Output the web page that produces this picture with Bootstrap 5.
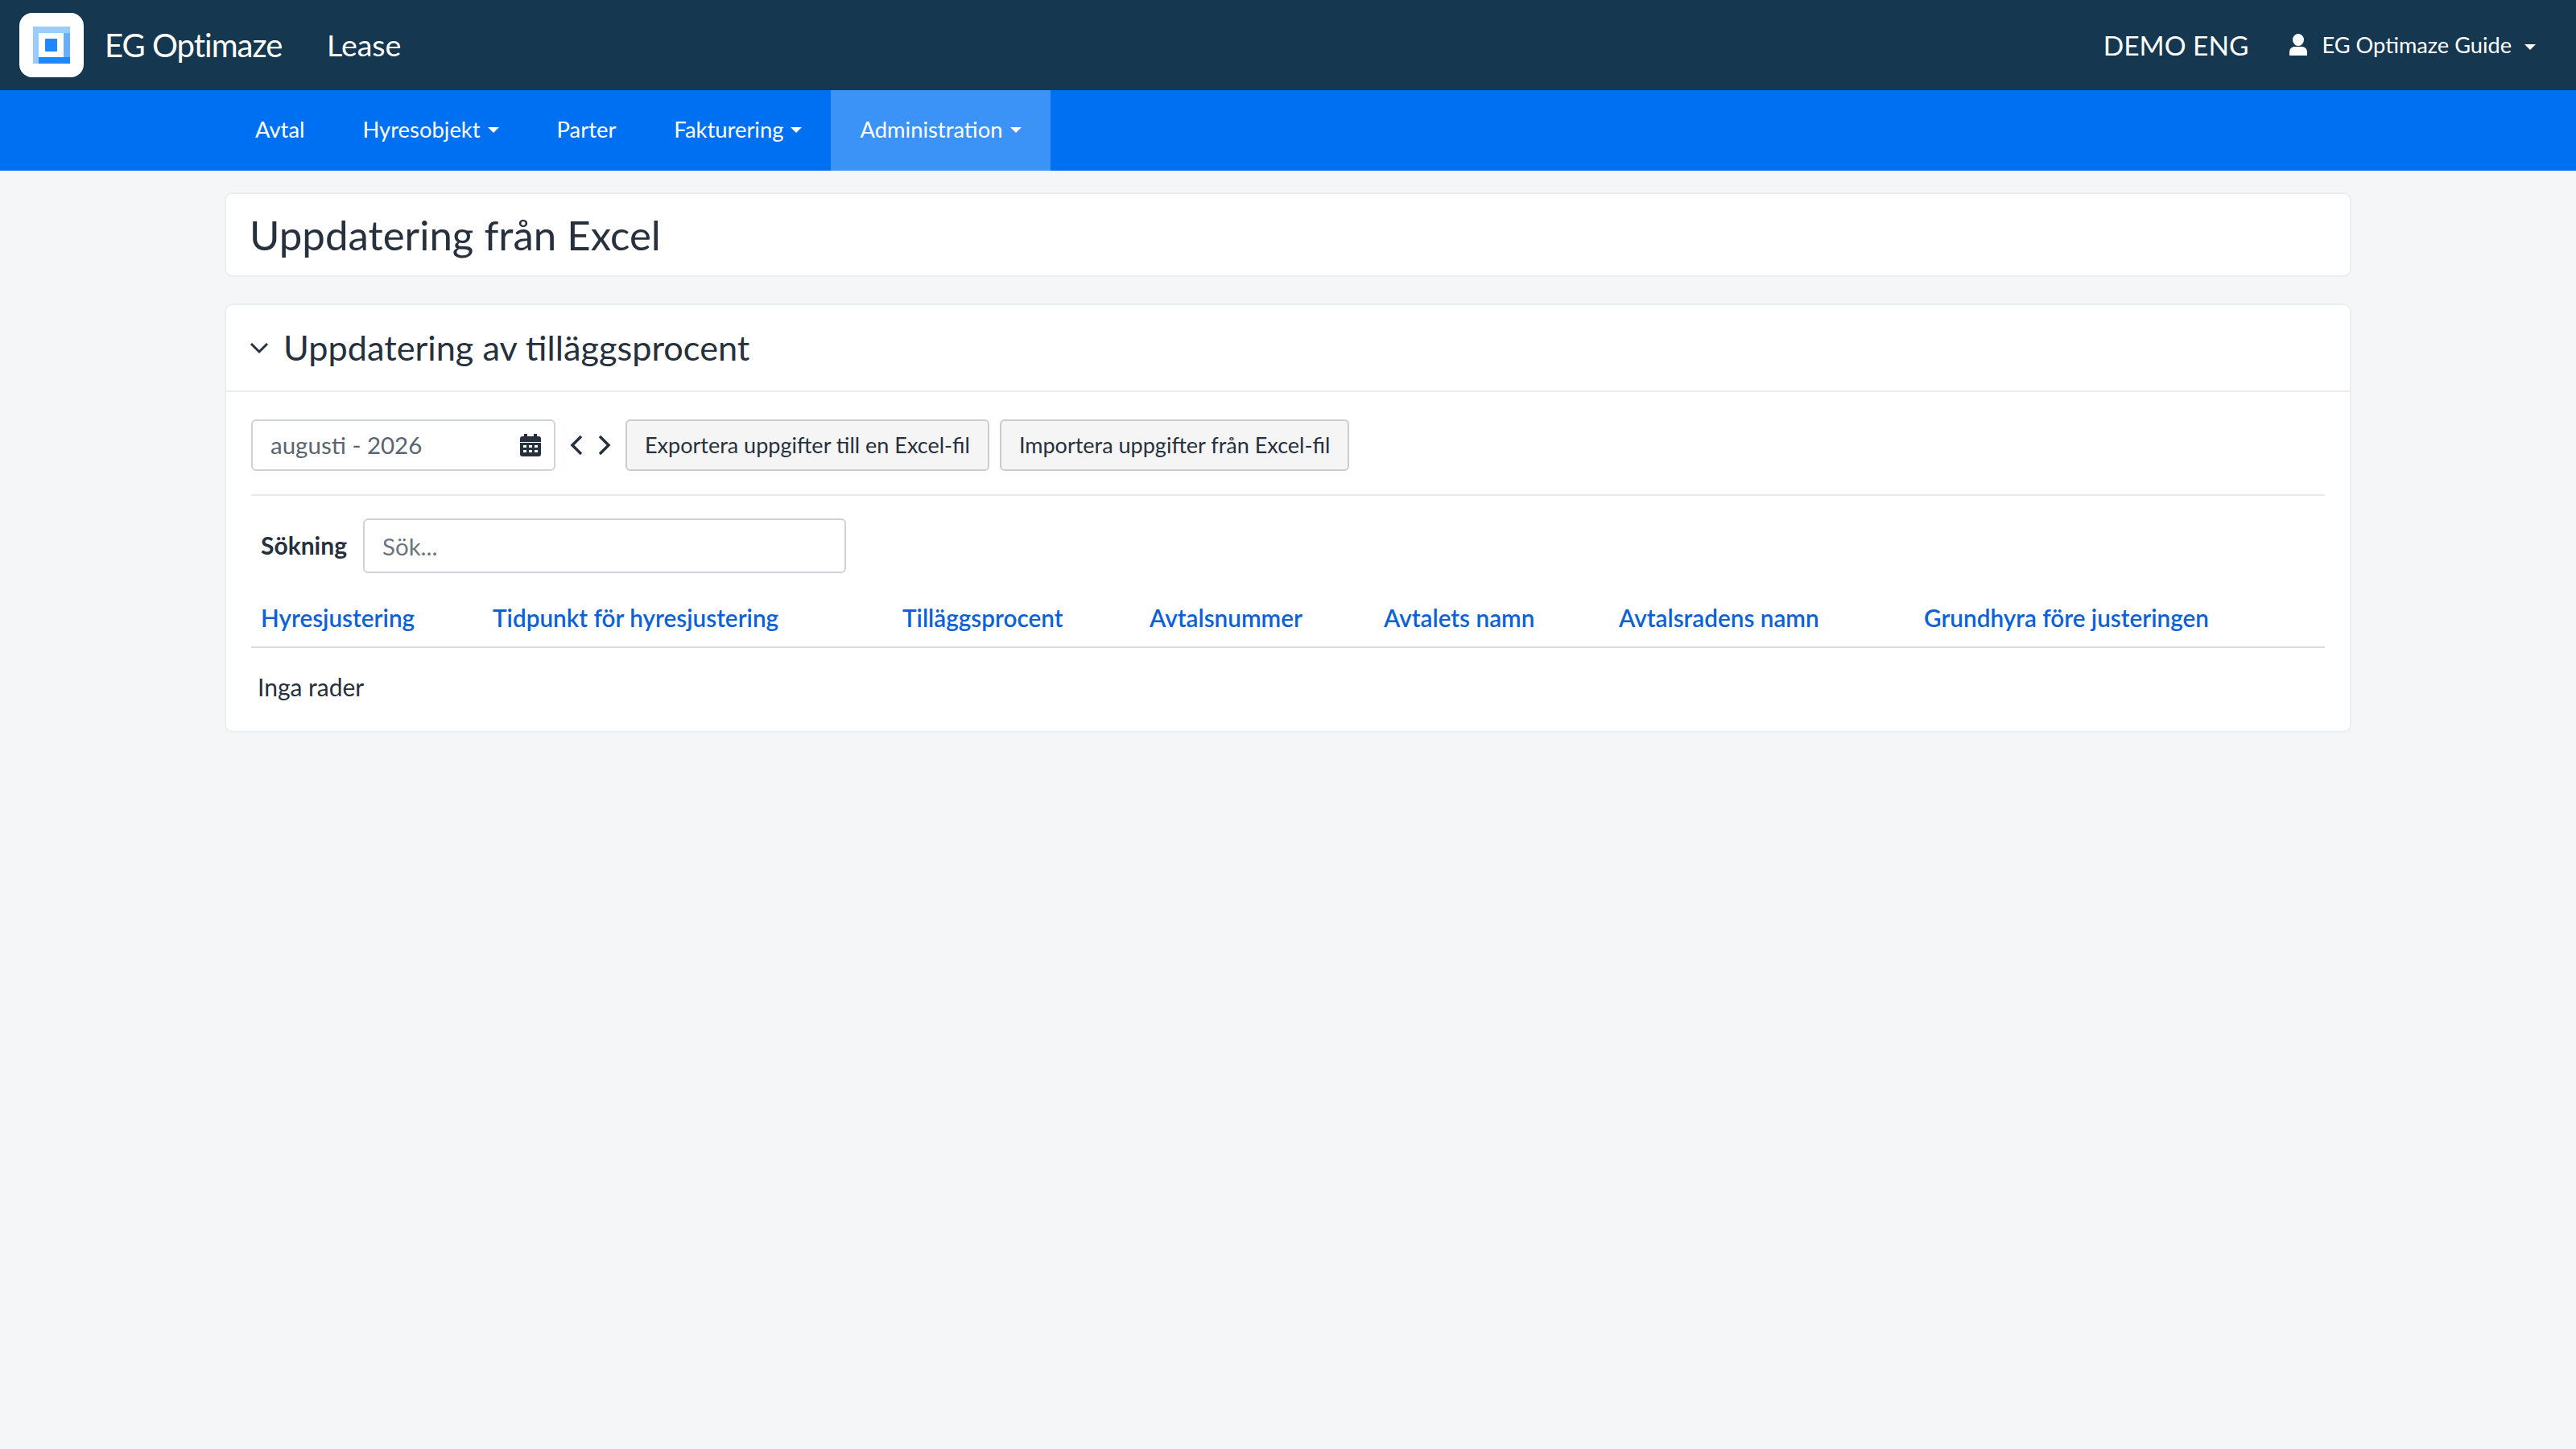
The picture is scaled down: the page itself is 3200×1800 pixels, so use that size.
<!doctype html>
<html lang="sv">
<head>
<meta charset="utf-8">
<title>Uppdatering från Excel</title>
<link href="https://cdn.jsdelivr.net/npm/bootstrap@5.3.0/dist/css/bootstrap.min.css" rel="stylesheet">
<style>
html,body{height:100%}
body{background:#f5f6f8;color:#27303d;font-family:"Lato","Liberation Sans",sans-serif;font-size:30px;line-height:1.5}
.topbar{height:112px;background:#15374f;color:#fff;padding:0 50px 0 24px}
.logo-box{width:80px;height:80px;background:#fff;border-radius:16px}
.brand-name{font-size:40px;margin-left:26px;letter-spacing:-1px;width:276px;white-space:nowrap}
.app-name{font-size:37.500px}
.tenant{font-size:33.500px;margin-right:49px}
.user-name{font-size:27.200px;margin-left:18px;white-space:nowrap}
.caret-down{display:inline-block;width:0;height:0;border-left:7px solid transparent;border-right:7px solid transparent;border-top:7px solid currentColor;margin-left:9px;vertical-align:middle}
.mainbar{height:100px;background:#0070f2;padding-left:281px}
.mainbar .nav-link{color:#fff;font-size:27.400px;padding:0 36px 2px;height:100px;display:flex;align-items:center}
.mainbar .nav-link.active-item{background:#3b93f7}
.page-wrap{padding:27px 279px 0}
.panel-card{border:2px solid #ebedf0;border-radius:10px;background:#fff}
.title-card{height:105px;padding:0 29px;margin-bottom:33px}
.page-title{font-size:51px;font-weight:400;margin:0}
.panel-head{height:108px;padding:0 29px;border-bottom:2px solid #ebedf0;gap:18px}
.panel-title{font-size:43.300px;font-weight:400;margin:0}
.panel-body{padding:34px 31px 0;height:421px}
.date-box{width:378px;height:64px;border:2px solid #cfd3d8;border-radius:6px;padding:0 16px 0 22px;font-size:29.500px;color:#5b6470}
.arrows{gap:15px;margin:0 17px}
.excel-btn{height:64px;background:#f5f5f5;border:2px solid #cccccc;border-radius:6px;color:#27303d;font-size:27px;padding:0 22px;margin-right:13px}
.excel-btn:hover{background:#f5f5f5;border-color:#ccc}
.sep{border-top:2px solid #e8e9eb;margin:29px 0 28px}
.search-label{font-weight:700;font-size:30px;margin:0 20px 2px 12px}
.search-input{width:600px;height:68px;border:2px solid #cfd3d8;border-radius:6px;padding:0 22px;font-size:29.500px}
.search-input::placeholder{color:#6c757d}
.search-input:focus{box-shadow:none;border-color:#cfd3d8}
.data-table{margin:32px 0 0;table-layout:fixed;width:100%}
.data-table>thead>tr>th{border-bottom:2px solid #d9dbde;padding:0 12px 12px;height:60px;font-weight:600;background:transparent;vertical-align:bottom}
.data-table a{color:#0b62d6;text-decoration:none;font-size:29.700px;white-space:nowrap}
.data-table>tbody>tr>td{border:0;padding:26px 8px 0;background:transparent;font-size:30px;color:#27303d}
.c1{width:288px}.c2{width:509px}.c3{width:307px}.c4{width:291px}.c5{width:292px}.c6{width:379px}
</style>
</head>
<body>
<header class="topbar d-flex align-items-center">
  <div class="logo-box d-flex align-items-center justify-content-center flex-shrink-0">
    <svg width="46" height="46" viewBox="0 0 46 46" aria-hidden="true">
      <path fill="#99ccff" d="M0 0h46v8H7v38H0z"/>
      <path fill="#66b0ff" d="M38 8h8v30h-8z"/>
      <path fill="#1e88ff" d="M7 38h39v8H7z"/>
      <rect x="15" y="15" width="15" height="16" rx="1" fill="#1e88ff"/>
    </svg>
  </div>
  <div class="brand-name">EG Optimaze</div>
  <div class="app-name">Lease</div>
  <div class="ms-auto tenant">DEMO ENG</div>
  <svg width="24" height="28" viewBox="0 0 24 28" aria-hidden="true"><ellipse cx="12" cy="7.500" rx="7" ry="7.500" fill="#fff"/><path fill="#fff" d="M1 27v-4c0-4.500 3-7 7-7h8c4 0 7 2.500 7 7v4z"/></svg>
  <div class="user-name">EG Optimaze Guide <span class="caret-down"></span></div>
</header>
<nav class="mainbar nav">
  <a class="nav-link" href="#">Avtal</a>
  <a class="nav-link" href="#">Hyresobjekt<span class="caret-down"></span></a>
  <a class="nav-link" href="#">Parter</a>
  <a class="nav-link" href="#">Fakturering<span class="caret-down"></span></a>
  <a class="nav-link active-item" href="#">Administration<span class="caret-down"></span></a>
</nav>
<main class="page-wrap">
  <section class="panel-card title-card d-flex align-items-center">
    <h1 class="page-title">Uppdatering från Excel</h1>
  </section>
  <section class="panel-card">
    <div class="panel-head d-flex align-items-center">
      <svg width="24" height="16" viewBox="0 0 24 16" aria-hidden="true"><path d="M2 3l10 10L22 3" fill="none" stroke="#27303d" stroke-width="3"/></svg>
      <h2 class="panel-title">Uppdatering av tilläggsprocent</h2>
    </div>
    <div class="panel-body">
      <div class="d-flex align-items-center">
        <div class="date-box d-flex align-items-center justify-content-between">
          <span>augusti - 2026</span>
          <svg width="26" height="28" viewBox="0 0 26 28" aria-hidden="true"><path fill="#27303d" fill-rule="evenodd" d="M5 0h4v3h8V0h4v3h2a3 3 0 0 1 3 3v4H0V6a3 3 0 0 1 3-3h2zM0 11h26v14a3 3 0 0 1-3 3H3a3 3 0 0 1-3-3zM4 14v3h4v-3zm7 0v3h4v-3zm7 0v3h4v-3zM4 20v3h4v-3zm7 0v3h4v-3zm7 0v3h4v-3z"/></svg>
        </div>
        <div class="arrows d-flex align-items-center">
          <svg width="19" height="26" viewBox="0 0 19 26" aria-hidden="true"><path d="M15 2L4 13l11 11" fill="none" stroke="#27303d" stroke-width="3.500"/></svg>
          <svg width="19" height="26" viewBox="0 0 19 26" aria-hidden="true"><path d="M4 2l11 11L4 24" fill="none" stroke="#27303d" stroke-width="3.500"/></svg>
        </div>
        <button type="button" class="btn excel-btn">Exportera uppgifter till en Excel-fil</button>
        <button type="button" class="btn excel-btn">Importera uppgifter från Excel-fil</button>
      </div>
      <div class="sep"></div>
      <div class="d-flex align-items-center">
        <label class="search-label" for="sok">Sökning</label>
        <input id="sok" class="form-control search-input" type="text" placeholder="Sök...">
      </div>
      <table class="table data-table">
        <colgroup><col class="c1"><col class="c2"><col class="c3"><col class="c4"><col class="c5"><col class="c6"><col></colgroup>
        <thead><tr>
          <th><a href="#">Hyresjustering</a></th>
          <th><a href="#">Tidpunkt för hyresjustering</a></th>
          <th><a href="#">Tilläggsprocent</a></th>
          <th><a href="#">Avtalsnummer</a></th>
          <th><a href="#">Avtalets namn</a></th>
          <th><a href="#">Avtalsradens namn</a></th>
          <th><a href="#">Grundhyra före justeringen</a></th>
        </tr></thead>
        <tbody><tr><td colspan="7">Inga rader</td></tr></tbody>
      </table>
    </div>
  </section>
</main>
<script src="https://cdn.jsdelivr.net/npm/bootstrap@5.3.0/dist/js/bootstrap.bundle.min.js"></script>
</body>
</html>
